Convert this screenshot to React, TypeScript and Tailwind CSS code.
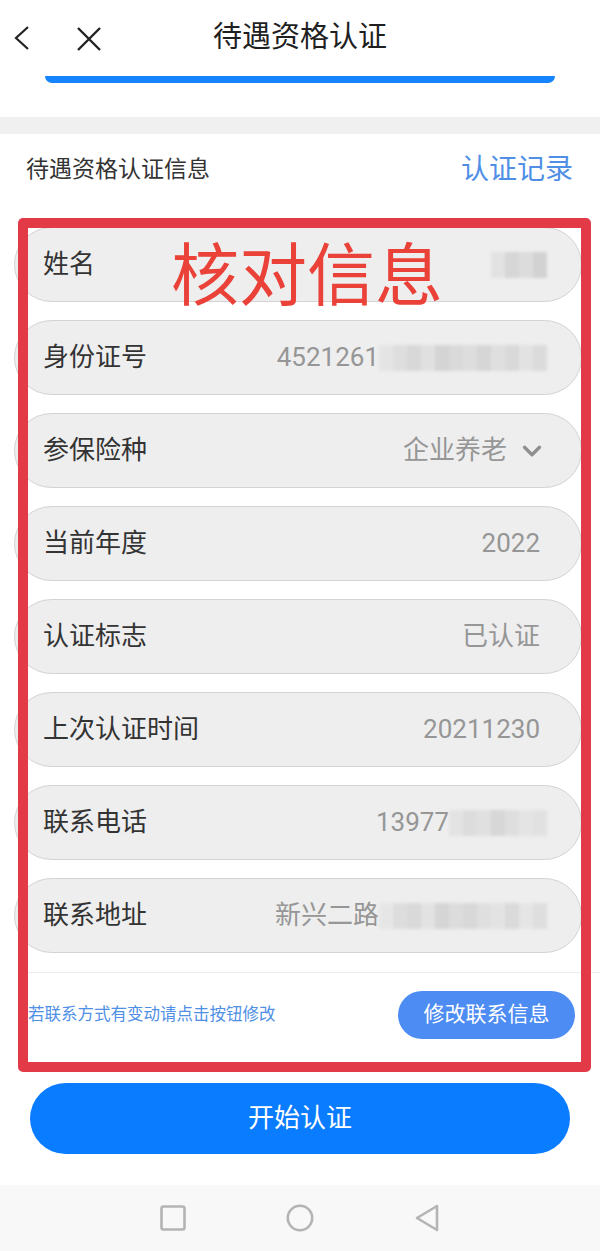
import { ChevronDown } from "lucide-react";

const font = { fontFamily: "Roboto, 'Noto Sans CJK SC', sans-serif" };

const Mosaic = ({ cells }: { cells: string[] }) => (
  <span className="inline-flex h-[26px] blur-[1.5px]">
    {cells.map((c, i) => (
      <span key={i} className="h-full w-[14px]" style={{ background: c }} />
    ))}
  </span>
);

type Row = { label: string; value?: string; mosaic?: string[]; select?: boolean };

const rows: Row[] = [
  { label: "姓名", mosaic: ["#e2e2e2", "#d6d6d6", "#dcdcdc", "#d2d2d2"] },
  {
    label: "身份证号",
    value: "4521261",
    mosaic: ["#e4e4e4", "#dedede", "#d8d8d8", "#e0e0e0", "#d4d4d4", "#dadada", "#dddddd", "#d6d6d6", "#dfdfdf", "#d9d9d9", "#e2e2e2", "#dbdbdb"],
  },
  { label: "参保险种", value: "企业养老", select: true },
  { label: "当前年度", value: "2022" },
  { label: "认证标志", value: "已认证" },
  { label: "上次认证时间", value: "20211230" },
  {
    label: "联系电话",
    value: "13977",
    mosaic: ["#e3e3e3", "#dcdcdc", "#e0e0e0", "#d7d7d7", "#dedede", "#e4e4e4", "#e1e1e1"],
  },
  {
    label: "联系地址",
    value: "新兴二路",
    mosaic: ["#e6e6e6", "#dddddd", "#d9d9d9", "#e2e2e2", "#d5d5d5", "#dcdcdc", "#d8d8d8", "#dfdfdf", "#e3e3e3", "#dadada", "#e5e5e5", "#dedede"],
  },
];

export default function App() {
  return (
    <div className="relative flex h-[1251px] w-[600px] flex-col overflow-hidden bg-white" style={font}>
      {/* header */}
      <div className="relative flex h-[76px] shrink-0 items-center justify-center">
        <svg className="absolute left-[12px] top-[25px]" width="20" height="26" viewBox="0 0 20 26">
          <path d="M16 2 L4 13 L16 24" fill="none" stroke="#222" strokeWidth="2.2" />
        </svg>
        <svg className="absolute left-[76px] top-[26px]" width="26" height="26" viewBox="0 0 26 26">
          <path d="M2 2 L24 24 M24 2 L2 24" fill="none" stroke="#222" strokeWidth="2.4" />
        </svg>
        <span className="text-[29px] text-[#1f1f1f]">待遇资格认证</span>
      </div>
      <div className="mx-[45px] h-[7px] shrink-0 rounded-b-[40px] bg-[#1684fc]" />
      <div className="h-[34px] shrink-0" />
      <div className="h-[17px] shrink-0 bg-[#f0f0f0]" />

      {/* section title */}
      <div className="flex h-[72px] shrink-0 items-center justify-between pl-[26px] pr-[27px]">
        <span className="text-[23px] text-[#333]">待遇资格认证信息</span>
        <span className="text-[28px] text-[#4f8fe6]">认证记录</span>
      </div>

      {/* info rows */}
      <div className="mt-[21px] flex flex-col gap-[18px] pl-[14px] pr-[18px]">
        {rows.map((r) => (
          <div
            key={r.label}
            className="flex h-[75px] items-center justify-between rounded-full border border-[#d3d3d3] bg-[#eeeeee] pl-[28px] pr-[34px]"
          >
            <span className="text-[26px] text-[#333]">{r.label}</span>
            <span className="flex items-center text-[26px] text-[#969696]">
              {r.value && <span>{r.value}</span>}
              {r.mosaic && <Mosaic cells={r.mosaic} />}
              {r.select && <ChevronDown className="ml-[10px] size-[30px] text-[#8f8f8f]" strokeWidth={2.6} />}
              {!r.mosaic && !r.select && <span className="w-[7px]" />}
            </span>
          </div>
        ))}
      </div>

      <div className="mt-[19px] ml-[28px] h-px shrink-0 bg-[#ececec]" />

      {/* contact hint */}
      <div className="flex h-[84px] shrink-0 items-center justify-between pl-[28px] pr-[25px]">
        <span className="text-[16.5px] text-[#4f8fe6]">若联系方式有变动请点击按钮修改</span>
        <button className="flex h-[48px] w-[177px] items-center justify-center rounded-full bg-[#4d8cf2] text-[21px] text-white">
          修改联系信息
        </button>
      </div>

      {/* start */}
      <div className="mt-[26px] px-[30px]">
        <button className="flex h-[71px] w-full items-center justify-center rounded-full bg-[#0a7cff] text-[26px] text-white">
          开始认证
        </button>
      </div>

      {/* nav bar */}
      <div className="mt-auto flex h-[66px] shrink-0 items-center justify-center gap-[100px] bg-[#f8f8f8]">
        <svg width="26" height="26" viewBox="0 0 26 26">
          <rect x="1.5" y="1.5" width="23" height="23" rx="2" fill="none" stroke="#b4b4b4" strokeWidth="2.6" />
        </svg>
        <svg width="28" height="28" viewBox="0 0 28 28">
          <circle cx="14" cy="14" r="12.2" fill="none" stroke="#b4b4b4" strokeWidth="2.6" />
        </svg>
        <svg width="26" height="28" viewBox="0 0 26 28">
          <path d="M23 2 L3 14 L23 26 Z" fill="none" stroke="#b4b4b4" strokeWidth="2.6" strokeLinejoin="round" />
        </svg>
      </div>

      {/* annotation overlay */}
      <div className="pointer-events-none absolute left-[18px] top-[218px] h-[854px] w-[573px] rounded-[5px] border-[10px] border-[#e33a48]" />
      <span className="pointer-events-none absolute left-[171px] top-[243px] text-[68px] leading-none text-[#ea4138]">
        核对信息
      </span>
    </div>
  );
}
